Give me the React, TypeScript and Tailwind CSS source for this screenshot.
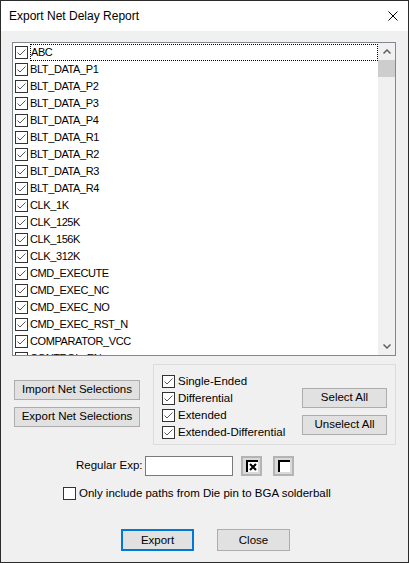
const nets = [
  "ABC",
  "BLT_DATA_P1",
  "BLT_DATA_P2",
  "BLT_DATA_P3",
  "BLT_DATA_P4",
  "BLT_DATA_R1",
  "BLT_DATA_R2",
  "BLT_DATA_R3",
  "BLT_DATA_R4",
  "CLK_1K",
  "CLK_125K",
  "CLK_156K",
  "CLK_312K",
  "CMD_EXECUTE",
  "CMD_EXEC_NC",
  "CMD_EXEC_NO",
  "CMD_EXEC_RST_N",
  "COMPARATOR_VCC",
  "CONTROL_EN",
];

const types = ["Single-Ended", "Differential", "Extended", "Extended-Differential"];

function Check({ checked = true }: { checked?: boolean }) {
  return (
    <span className="flex h-[13px] w-[13px] shrink-0 items-center justify-center border border-[#333333] bg-white">
      {checked && (
        <svg width="11" height="11" viewBox="0 0 11 11">
          <polyline points="1.5,5.5 4,8 9.5,2.5" fill="none" stroke="#5a5a5a" strokeWidth="1" />
        </svg>
      )}
    </span>
  );
}

function Button({ children, className = "" }: { children: React.ReactNode; className?: string }) {
  return (
    <button className={"flex items-center justify-center border border-[#adadad] bg-[#e1e1e1] text-[11.5px] text-black " + className}>
      {children}
    </button>
  );
}

export default function App() {
  return (
    <div
      className="h-[563px] w-[409px] overflow-hidden border border-[#2b2b2b] bg-[#f0f0f0] text-black"
      style={{ fontFamily: '"Liberation Sans", Arial, sans-serif' }}
    >
      <div className="flex h-[30px] items-center justify-between bg-white pl-2 pr-[10px]">
        <span className="text-[12px]">Export Net Delay Report</span>
        <svg width="10" height="10" viewBox="0 0 10 10">
          <path d="M0.5 0.5 L9.5 9.5 M9.5 0.5 L0.5 9.5" stroke="#000" strokeWidth="1" />
        </svg>
      </div>

      <div className="ml-[11px] mt-[11px] flex h-[314px] w-[384px] border border-[#828790] bg-white">
        <div className="flex-1 overflow-hidden pl-[2px] pt-[1px]">
          {nets.map((n, i) => (
            <div key={n} className="flex h-[17px] items-center gap-[2px]">
              <Check />
              <span
                className={
                  "flex h-[17px] items-center whitespace-nowrap text-[11px] tracking-[-0.4px] " +
                  (i === 0 ? "flex-1 border border-dotted border-black" : "")
                }
              >
                {n}
              </span>
            </div>
          ))}
        </div>
        <div className="flex w-[17px] flex-col bg-[#f0f0f0]">
          <div className="flex h-[17px] items-center justify-center">
            <svg width="8" height="5" viewBox="0 0 8 5">
              <polyline points="0.5,4.5 4,1 7.5,4.5" fill="none" stroke="#606060" strokeWidth="1.5" />
            </svg>
          </div>
          <div className="h-[17px] bg-[#cdcdcd]" />
          <div className="flex-1" />
          <div className="flex h-[17px] items-center justify-center">
            <svg width="8" height="5" viewBox="0 0 8 5">
              <polyline points="0.5,0.5 4,4 7.5,0.5" fill="none" stroke="#606060" strokeWidth="1.5" />
            </svg>
          </div>
        </div>
      </div>

      <div className="mt-[8px] flex">
        <div className="ml-[13px] flex flex-col gap-[7px] pt-[16px]">
          <Button className="h-[20px] w-[126px]">Import Net Selections</Button>
          <Button className="h-[20px] w-[126px]">Export Net Selections</Button>
        </div>
        <div className="ml-[13px] flex h-[81px] w-[243px] border border-[#dcdcdc] pl-[8px] pt-[8px]">
          <div className="flex flex-col">
            {types.map((t) => (
              <label key={t} className="flex h-[17px] items-center gap-[3px] whitespace-nowrap text-[11.5px]">
                <Check />
                {t}
              </label>
            ))}
          </div>
          <div className="ml-auto mr-[8px] flex flex-col gap-[7px] pt-[15px]">
            <Button className="h-[20px] w-[85px]">Select All</Button>
            <Button className="h-[20px] w-[85px]">Unselect All</Button>
          </div>
        </div>
      </div>

      <div className="mt-[11px] flex items-center">
        <span className="ml-[75px] w-[64px] whitespace-nowrap text-[11.5px]">Regular Exp:</span>
        <div className="ml-[5px] h-[20px] w-[88px] border border-[#7a7a7a] bg-white" />
        <div className="ml-[8px] flex h-[20px] w-[21px] items-center justify-center border-2 border-[#b4b4b4] bg-[#d9d9d9]">
          <div className="flex h-[12px] w-[12px] items-center justify-center border-l-2 border-t-2 border-black bg-white">
            <svg width="8" height="8" viewBox="0 0 8 8">
              <path d="M1 1 L7 7 M7 1 L1 7" stroke="#000" strokeWidth="2" />
            </svg>
          </div>
        </div>
        <div className="ml-[11px] flex h-[20px] w-[21px] items-center justify-center border-2 border-[#b4b4b4] bg-[#d9d9d9]">
          <div className="h-[12px] w-[12px] border-l-2 border-t-2 border-black bg-white" />
        </div>
      </div>

      <label className="ml-[62px] mt-[9px] flex items-center gap-[3px] whitespace-nowrap text-[11.5px]">
        <Check checked={false} />
        Only include paths from Die pin to BGA solderball
      </label>

      <div className="mt-[27px] flex gap-[23px] pl-[120px]">
        <Button className="h-[22px] w-[73px] border-2 !border-[#0078d7]">Export</Button>
        <Button className="h-[22px] w-[73px]">Close</Button>
      </div>
    </div>
  );
}
